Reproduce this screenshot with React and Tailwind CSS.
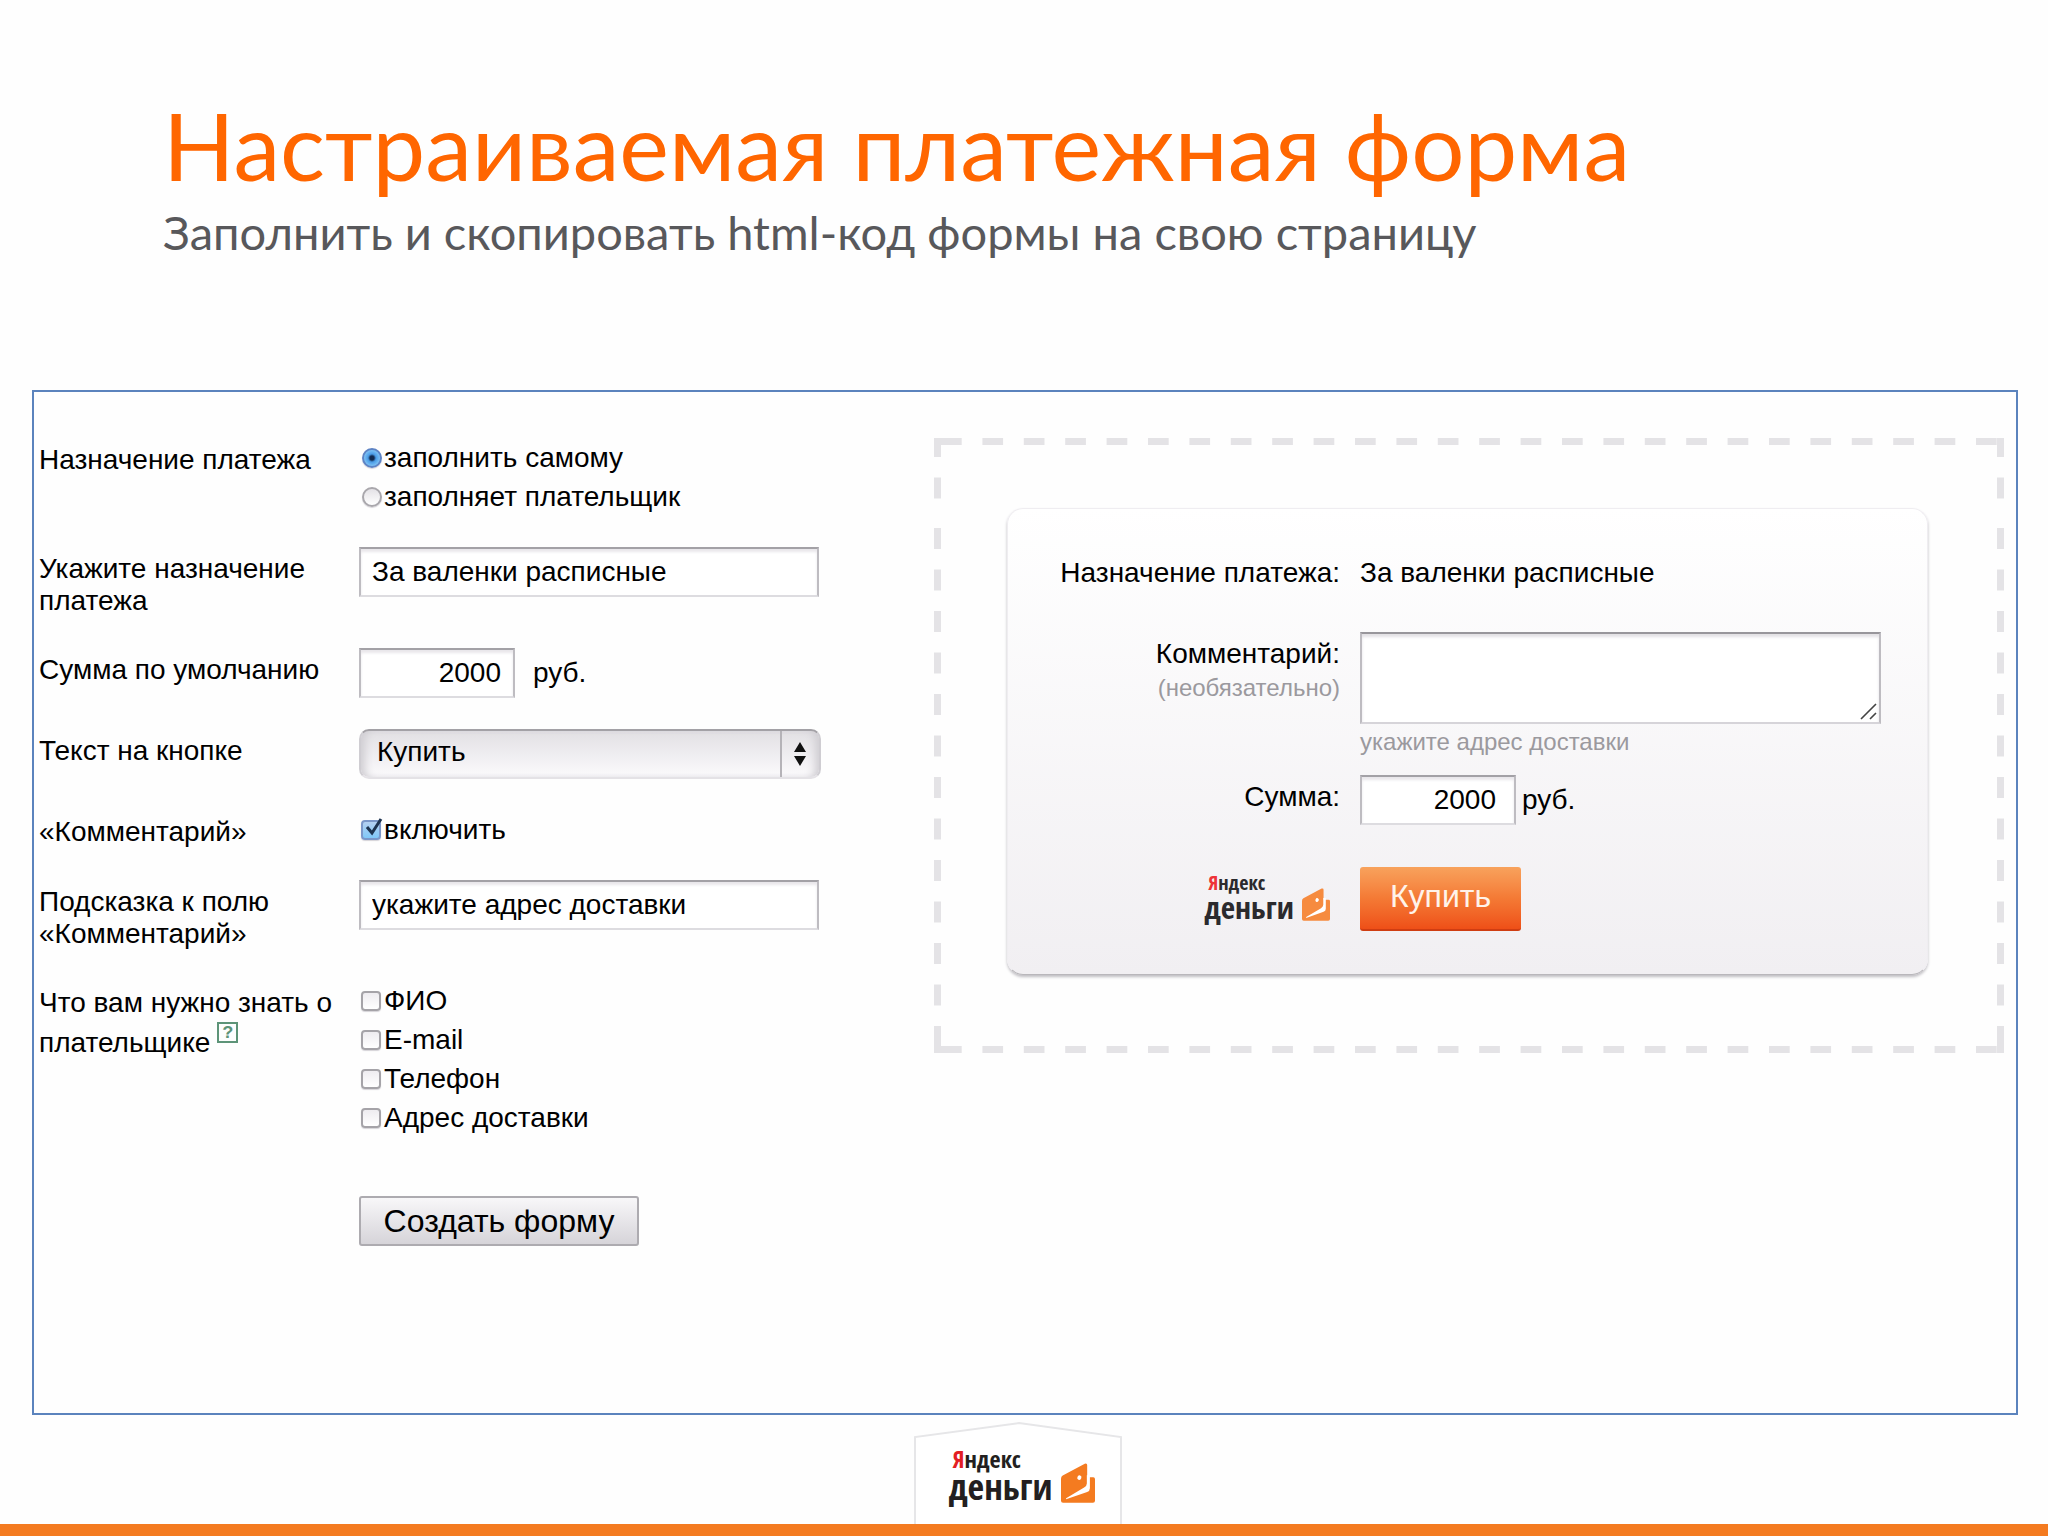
import React, { useState } from 'react';

const fieldClass =
  'h-[50px] border-2 border-t-[#a3a1a6] border-x-[#bebcc1] border-b-[#dddce0] bg-white pl-[11px] text-[28px] text-black outline-none shadow-[inset_0_3px_3px_#e9e7eb]';

const payerFields = [
  { id: 'fio', title: 'ФИО' },
  { id: 'email', title: 'E-mail' },
  { id: 'phone', title: 'Телефон' },
  { id: 'address', title: 'Адрес доставки' },
];

const Wallet = ({ className }) => (
  <svg className={className} viewBox="0 0 100 117" aria-hidden="true">
    <path fill="currentColor" d="M0 46Q0 40 5 37L70 2Q77 0 77 6V42H95Q100 42 100 47V111Q100 117 94 117H6Q0 117 0 111Z" />
    <path fill="#fff" d="M15 104L68 72Q76 67 76 60V36H85V74Q85 82 77 85L15 107Z" />
    <ellipse cx="54" cy="43" rx="6" ry="7" fill="#fff" transform="rotate(20 54 43)" />
  </svg>
);

const Radio = ({ id, title, checked, onChange }) => (
  <label htmlFor={id} className="ml-[3px] flex h-[39px] items-center gap-0.5">
    <input
      id={id}
      type="radio"
      name="purposeMode"
      checked={checked}
      onChange={onChange}
      className={`size-5 appearance-none rounded-full border-2 shadow-[0_1px_1px_#d5d3d8] ${
        checked
          ? 'border-[#5d83c4] bg-[radial-gradient(circle_at_center,#12294d_0px,#12294d_2px,#4a9be6_4px,#8accf8_9px)]'
          : 'border-[#a9a7ac] bg-linear-to-b from-[#e4e2e6] to-white'
      }`}
    />
    {title}
  </label>
);

const Checkbox = ({ id, title, checked, onChange }) => (
  <label htmlFor={id} className="relative ml-0.5 flex h-[39px] items-center gap-[3px]">
    <input
      id={id}
      type="checkbox"
      checked={checked}
      onChange={onChange}
      className="size-5 appearance-none rounded-[4px] border-2 border-[#a5a3a8] bg-linear-to-b from-[#eeecf0] to-white shadow-[0_1px_1px_#d5d3d8] checked:border-[#7b97c9] checked:from-[#b3d0f2] checked:to-[#7fc8f8]"
    />
    {checked && (
      <svg className="pointer-events-none absolute top-[7px] left-0 size-6" viewBox="0 0 24 24" aria-hidden="true">
        <path d="M6 10L11 16L20 2" fill="none" stroke="#1d3350" strokeWidth="3" />
      </svg>
    )}
    {title}
  </label>
);

const Row = ({ label, htmlFor, children }) => (
  <div className="flex items-start">
    <label htmlFor={htmlFor} className="w-80 shrink-0 pt-1.5 leading-8 whitespace-pre-line">
      {label}
    </label>
    {children}
  </div>
);

const App = () => {
  const [mode, setMode] = useState('self');
  const [purpose, setPurpose] = useState('За валенки расписные');
  const [sum, setSum] = useState('2000');
  const [buttonText, setButtonText] = useState('Купить');
  const [withComment, setWithComment] = useState(true);
  const [hint, setHint] = useState('укажите адрес доставки');
  const [payer, setPayer] = useState({});

  const togglePayer = (id) => {
    setPayer({ ...payer, [id]: !payer[id] });
  };

  return (
    <div className="flex min-h-screen flex-col bg-[#fefefe] font-['Liberation_Sans',sans-serif] text-[28px] text-black">
      <header className="px-[163px] pt-[90px] pb-[126px] font-['Lato',sans-serif]">
        <h1 className="text-[94px] leading-[110px] text-[#ff6600]">Настраиваемая платежная форма</h1>
        <p className="text-[47px] leading-[64px] text-[#58585b]">Заполнить и скопировать html-код формы на свою страницу</p>
      </header>

      <main className="mr-[30px] ml-8 flex flex-1 items-start border-2 border-[#5b83bd] pt-[46px] pr-3 pl-[5px]">
        {/* Form settings */}
        <form className="flex w-[895px] shrink-0 flex-col gap-[31px]" onSubmit={(e) => e.preventDefault()}>
          <div className="flex items-start" role="radiogroup" aria-labelledby="mode-label">
            <span id="mode-label" className="w-80 shrink-0 pt-1.5 leading-8">Назначение платежа</span>
            <div>
              <Radio id="self" title="заполнить самому" checked={mode === 'self'} onChange={() => setMode('self')} />
              <Radio id="payer" title="заполняет плательщик" checked={mode === 'payer'} onChange={() => setMode('payer')} />
            </div>
          </div>
          <Row label={'Укажите назначение\nплатежа'} htmlFor="purpose">
            <input id="purpose" type="text" className={`${fieldClass} w-[460px] pr-3`} value={purpose} onChange={(e) => setPurpose(e.target.value)} />
          </Row>
          <Row label="Сумма по умолчанию" htmlFor="sum">
            <div className="flex items-center gap-[18px]">
              <input id="sum" type="text" className={`${fieldClass} w-[156px] pr-3 text-right`} value={sum} onChange={(e) => setSum(e.target.value)} />
              <span>руб.</span>
            </div>
          </Row>
          <Row label="Текст на кнопке" htmlFor="button-text">
            <div className="relative w-[462px]">
              <select
                id="button-text"
                className="h-[50px] w-full appearance-none rounded-[10px] border-2 border-t-[#a3a1a6] border-x-[#cfcdd2] border-b-[#e4e2e6] bg-linear-to-b from-[#e2e0e4] to-[#fbfafc] pr-11 pb-1 pl-4 text-[28px] outline-none shadow-[inset_8px_0_8px_-4px_#cfcdd2,inset_-8px_0_8px_-4px_#cfcdd2]"
                value={buttonText}
                onChange={(e) => setButtonText(e.target.value)}
              >
                <option>Купить</option>
                <option>Оплатить</option>
                <option>Перевести</option>
              </select>
              <svg className="pointer-events-none absolute top-0 right-0 h-[50px] w-[42px]" viewBox="0 0 42 50" aria-hidden="true">
                <path d="M2 2V48" stroke="#b5b3b8" strokeWidth="2" />
                <path d="M21 13L27 23H15ZM21 37L27 27H15Z" fill="#111" />
              </svg>
            </div>
          </Row>
          <Row label="«Комментарий»" htmlFor="with-comment">
            <Checkbox id="with-comment" title="включить" checked={withComment} onChange={() => setWithComment(!withComment)} />
          </Row>
          <Row label={'Подсказка к полю\n«Комментарий»'} htmlFor="hint">
            <input id="hint" type="text" className={`${fieldClass} w-[460px] pr-3`} value={hint} onChange={(e) => setHint(e.target.value)} />
          </Row>
          <div className="flex items-start" role="group" aria-labelledby="payer-label">
            <div className="w-80 shrink-0 pt-0.5 leading-[39px]">
              <span id="payer-label">Что вам нужно знать о плательщике</span>
              <button
                type="button"
                aria-label="Подсказка"
                className="ml-[7px] inline-flex size-[21px] items-center justify-center border-2 border-[#5d9478] align-[14px] font-['Liberation_Mono',monospace] text-lg leading-none font-bold text-[#5d9478]"
              >
                ?
              </button>
            </div>
            <div>
              {payerFields.map((f) => (
                <Checkbox key={f.id} id={f.id} title={f.title} checked={!!payer[f.id]} onChange={() => togglePayer(f.id)} />
              ))}
            </div>
          </div>
          <button
            type="submit"
            className="mt-7 ml-80 h-[50px] w-[280px] rounded-[3px] border-2 border-[#adabb0] bg-linear-to-b from-[#f8f7f9] to-[#d6d4d9] text-[32px] leading-none"
          >
            Создать форму
          </button>
        </form>

        {/* Preview */}
        <section className="relative flex-1 pt-[70px] pr-[76px] pb-[78px] pl-[73px]">
          {/* half of each 14px stroke is clipped by the svg edge */}
          <svg className="absolute inset-0 size-full" stroke="#e4e3e6" strokeWidth="14" aria-hidden="true">
            <line x1="7" y1="0" x2="100%" y2="0" strokeDasharray="20.7 20.7" />
            <line x1="7" y1="100%" x2="100%" y2="100%" strokeDasharray="20.7 20.7" />
            <line x1="0" y1="0" x2="0" y2="61" strokeDasharray="19 20.5 21 20" />
            <line x1="100%" y1="0" x2="100%" y2="61" strokeDasharray="19 20.5 21 20" />
            <line x1="0" y1="90" x2="0" y2="100%" strokeDasharray="21 20.5" />
            <line x1="100%" y1="90" x2="100%" y2="100%" strokeDasharray="21 20.5" />
            <line x1="0" y1="98%" x2="0" y2="100%" />
            <line x1="100%" y1="98%" x2="100%" y2="100%" />
          </svg>
          <form
            className="relative grid grid-cols-[332px_1fr] gap-x-5 rounded-2xl border border-[#efedf1] border-b-[#b9b7bb] bg-linear-to-b from-white to-[#f1eff2] pt-12 pr-[46px] pb-[43px] shadow-[0_2px_3px_#bfbdc2]"
            onSubmit={(e) => e.preventDefault()}
          >
            <span className="text-right leading-8">Назначение платежа:</span>
            <span className="leading-8">{purpose}</span>

            <label htmlFor="comment" className="mt-[43px] pt-1.5 text-right leading-8">
              Комментарий:
              <span className="block text-[24px] leading-9 text-[#9b999e]">(необязательно)</span>
            </label>
            <div className="mt-[43px]">
              <div className="relative">
                <textarea
                  id="comment"
                  className="block h-[92px] w-full resize-none border-2 border-t-[#98969b] border-x-[#bebcc1] border-b-[#d6d4d9] bg-white p-2 outline-none shadow-[inset_0_3px_3px_#e3e1e5]"
                />
                <svg className="pointer-events-none absolute right-1 bottom-1 size-[17px]" viewBox="0 0 17 17" aria-hidden="true">
                  <path d="M1 16L16 1M10 16L16 10" stroke="#444" strokeWidth="1.6" />
                </svg>
              </div>
              <p className="text-[24px] leading-9 text-[#9b999e]">{hint}</p>
            </div>

            <label htmlFor="preview-sum" className="mt-[15px] pt-1.5 text-right leading-8">Сумма:</label>
            <div className="mt-[15px] flex items-center gap-1.5">
              <input id="preview-sum" type="text" className={`${fieldClass} w-[156px] pr-[18px] text-right`} value={sum} onChange={(e) => setSum(e.target.value)} />
              <span>руб.</span>
            </div>

            <div className="mt-[42px] mr-2.5 flex items-end justify-end gap-2 self-start pt-1.5 font-['Open_Sans_Condensed','Roboto_Condensed',sans-serif] font-semibold text-[#2b2a2d]">
              <div>
                <p className="pl-1 text-[20px] leading-5"><span className="text-[#ee3338]">Я</span>ндекс</p>
                <p className="text-[31px] leading-7">деньги</p>
              </div>
              <Wallet className="w-[28px] text-[#f68b3f]" />
            </div>
            <button
              type="submit"
              className="mt-[42px] h-16 w-[161px] rounded-[3px] border-b-2 border-[#cf3d12] bg-linear-to-b from-[#f8a25c] via-[#f47a35] to-[#ee4f17] pb-1 text-[32px] leading-none text-[#fff3ea]"
            >
              {buttonText}
            </button>
          </form>
        </section>
      </main>

      <footer className="flex flex-col items-center border-b-12 border-[#f47b20] pt-1.5 pr-[13px]">
        <div className="relative h-[103px] w-[208px] pt-[26px] pl-2">
          <svg className="absolute inset-0 size-full" viewBox="0 0 208 103" aria-hidden="true">
            <path d="M1 103V16L105 2L207 16V103" fill="#fff" stroke="#e6e6e8" strokeWidth="2" />
          </svg>
          <div className="relative flex items-end justify-center gap-2 font-['Open_Sans_Condensed','Roboto_Condensed',sans-serif] font-semibold text-[#231f20]">
            <div>
              <p className="pl-1 text-[24px] leading-6"><span className="text-[#e31e24]">Я</span>ндекс</p>
              <p className="text-[36px] leading-8">деньги</p>
            </div>
            <Wallet className="w-[34px] text-[#f47b20]" />
          </div>
        </div>
      </footer>
    </div>
  );
};

export default App;
